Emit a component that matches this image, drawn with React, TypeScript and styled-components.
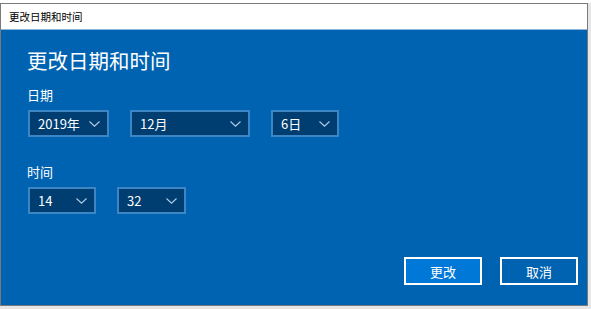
import React from 'react'
import styled, { createGlobalStyle } from 'styled-components'

const Global = createGlobalStyle`
  html, body {
    margin: 0;
    padding: 0;
  }
  body {
    width: 591px;
    height: 309px;
    overflow: hidden;
    background: linear-gradient(#ffffff 3px, #e6e6e6 3px);
    font-family: "Noto Sans CJK SC", "Noto Sans", sans-serif;
  }
`

const Page = styled.div`
  padding: 3px 3px 3px 0;
  height: 303px;
`

const Window = styled.div`
  width: 586px;
  height: 301px;
  border: 1px solid #7a7a7a;
  display: flex;
  flex-direction: column;
  background: #0063b1;
`

const TitleBar = styled.div`
  height: 25px;
  background: #ffffff;
  border-bottom: 1px solid #8db8dd;
  display: flex;
  align-items: center;
  padding-left: 8px;
  font-size: 10.5px;
  color: #000;
`

const Body = styled.div`
  flex: 1;
  display: flex;
  flex-direction: column;
  padding: 17px 9px 20px 26px;
  color: #ffffff;
`

const Heading = styled.h1`
  margin: 0;
  font-size: 20.5px;
  line-height: 26px;
  font-weight: 400;
`

const Label = styled.div<{ $top: number }>`
  margin-top: ${p => p.$top}px;
  font-size: 13px;
  line-height: 16px;
`

const Row = styled.div`
  display: flex;
  gap: 21px;
  margin-top: 7px;
  padding-left: 1px;
`

const Select = styled.div<{ $w: number }>`
  width: ${p => p.$w}px;
  height: 27px;
  box-sizing: border-box;
  border: 2px solid #3d86c6;
  background: #003e72;
  display: flex;
  align-items: center;
  justify-content: space-between;
  padding: 0 7px 0 8px;
  font-size: 13px;
  color: #fff;
`

const Footer = styled.div`
  margin-top: auto;
  display: flex;
  justify-content: flex-end;
  gap: 18px;
`

const Button = styled.button<{ $primary?: boolean }>`
  width: 78px;
  height: 28px;
  box-sizing: border-box;
  border: 2px solid #ffffff;
  background: ${p => (p.$primary ? '#0078d7' : '#0063b1')};
  color: #fff;
  font-family: inherit;
  font-size: 13px;
  padding: 0;
`

const Chevron = () => (
  <svg width="11" height="6" viewBox="0 0 11 6">
    <path d="M0.5 0.5 L5.5 5.2 L10.5 0.5" fill="none" stroke="#b4cde6" strokeWidth="1.1" />
  </svg>
)

const Drop: React.FC<{ w: number; value: string }> = ({ w, value }) => (
  <Select $w={w}>
    <span>{value}</span>
    <Chevron />
  </Select>
)

const App: React.FC = () => {
  return (
    <>
      <Global />
      <Page>
        <Window>
          <TitleBar>更改日期和时间</TitleBar>
          <Body>
            <Heading>更改日期和时间</Heading>
            <Label $top={14}>日期</Label>
            <Row>
              <Drop w={81} value="2019年" />
              <Drop w={120} value="12月" />
              <Drop w={68} value="6日" />
            </Row>
            <Label $top={27}>时间</Label>
            <Row>
              <Drop w={68} value="14" />
              <Drop w={69} value="32" />
            </Row>
            <Footer>
              <Button $primary>更改</Button>
              <Button>取消</Button>
            </Footer>
          </Body>
        </Window>
      </Page>
    </>
  )
}

export default App
